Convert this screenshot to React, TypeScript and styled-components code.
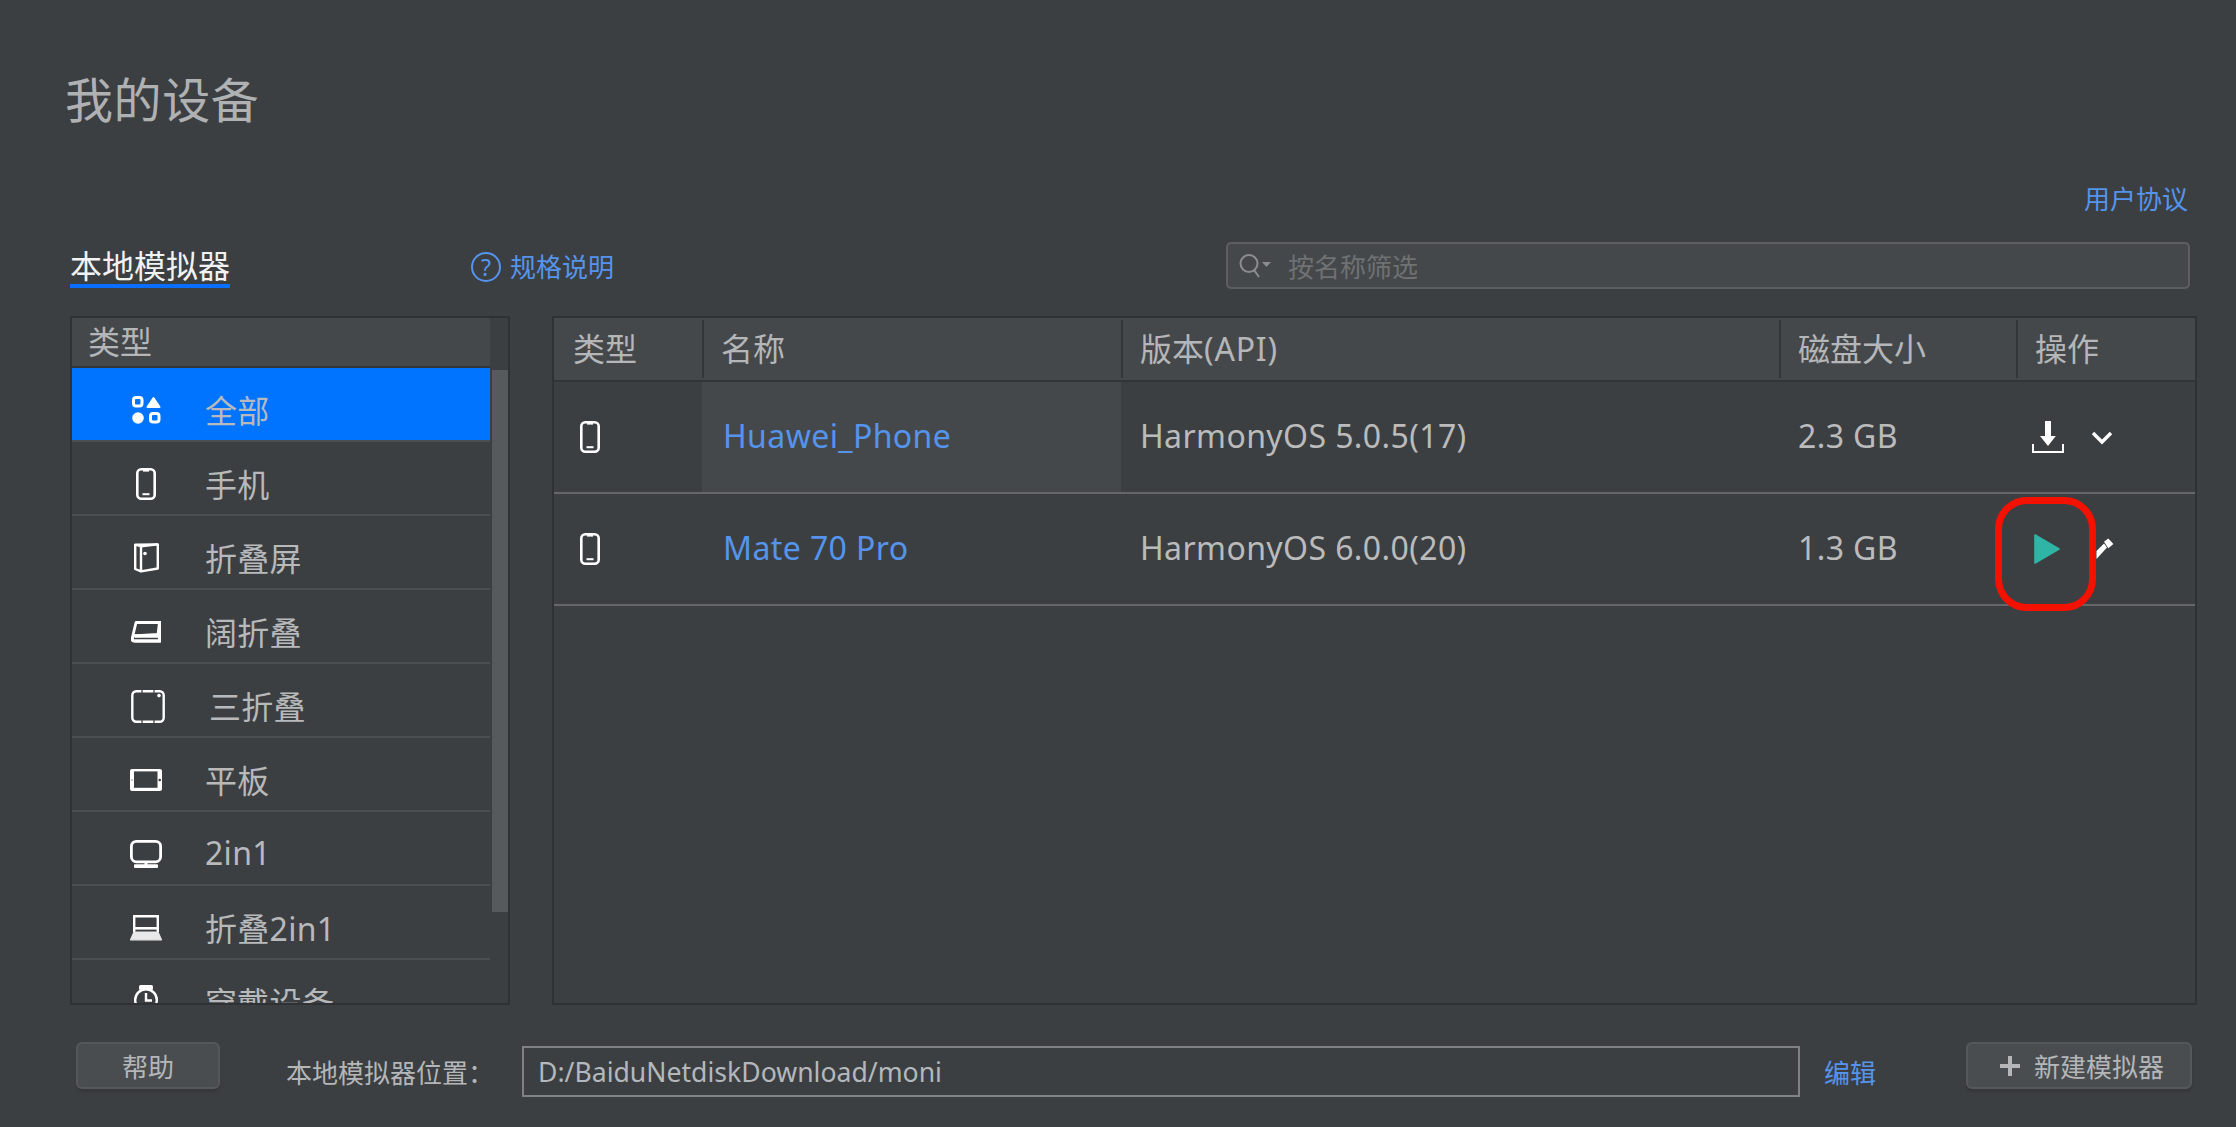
import React from 'react'
import styled, { createGlobalStyle } from 'styled-components'

const GlobalStyle = createGlobalStyle`
  html, body {
    margin: 0;
    padding: 0;
    background: #3c3f42;
  }
  * {
    box-sizing: border-box;
  }
`

const AllIcon = () => (
  <svg width="29" height="28" viewBox="0 0 29 28">
    <rect x="1.5" y="1.5" width="8.5" height="8.5" rx="2.5" fill="none" stroke="#fff" strokeWidth="3" />
    <path d="M21.5 2 L27.5 11 H15.5 Z" fill="#fff" stroke="#fff" strokeWidth="2" strokeLinejoin="round" />
    <circle cx="6" cy="22" r="5.8" fill="#fff" />
    <rect x="18.5" y="17.5" width="8.5" height="8.5" rx="2.5" fill="none" stroke="#fff" strokeWidth="3" />
  </svg>
)

const PhoneIcon = () => (
  <svg width="20" height="32" viewBox="0 0 20 32">
    <rect x="1.3" y="1.3" width="17.4" height="29.4" rx="4" fill="none" stroke="#fff" strokeWidth="2.6" />
    <rect x="6.5" y="25.2" width="7" height="2" fill="#fff" />
    <rect x="7" y="2" width="6" height="1.6" fill="#fff" />
  </svg>
)

const FoldIcon = () => (
  <svg width="25" height="30" viewBox="0 0 25 30" fill="none" stroke="#fff" strokeWidth="2.4" strokeLinejoin="round">
    <path d="M7 3.2 L23.8 1.4 V25.5 L7 28.4 Z" />
    <path d="M7 3.2 L1.2 1.6 L23.8 1.4 M1.2 1.6 V26 L7 28.4" />
    <circle cx="11" cy="10.5" r="1.8" fill="#fff" stroke="none" />
  </svg>
)

const WideFoldIcon = () => (
  <svg width="30" height="22" viewBox="0 0 30 22" fill="none" stroke="#fff" strokeWidth="2.8" strokeLinejoin="round">
    <path d="M5 1.5 L28.6 1.3 L27 13.5 L1.8 15 Z" />
    <path d="M1.6 15.5 C0.8 19 1.5 20 4 20 H28.6 V1.3 V15 H4" strokeWidth="3.4" />
  </svg>
)

const TriFoldIcon = () => (
  <svg width="34" height="33" viewBox="0 0 34 33">
    <rect x="1.3" y="1.3" width="31.4" height="30.4" rx="4" fill="none" stroke="#fff" strokeWidth="2.4" />
    <path d="M11 0 V3 M23 0 V3 M11 30 V33 M23 30 V33" stroke="#3c3f42" strokeWidth="1.2" />
    <circle cx="28" cy="5.6" r="1.8" fill="#fff" />
  </svg>
)

const TabletIcon = () => (
  <svg width="32" height="22" viewBox="0 0 32 22">
    <rect x="0" y="0" width="32" height="22" rx="2" fill="#fff" />
    <rect x="4" y="2.4" width="23.5" height="16.4" fill="#3c3f42" />
    <circle cx="2" cy="11" r="1" fill="#b5b5b5" />
    <circle cx="29.7" cy="11" r="1.3" fill="#3c3f42" />
  </svg>
)

const TwoInOneIcon = () => (
  <svg width="32" height="28" viewBox="0 0 32 28">
    <rect x="1.4" y="1.4" width="29.2" height="20.4" rx="5" fill="none" stroke="#fff" strokeWidth="2.8" />
    <rect x="14.5" y="22" width="3" height="3" fill="#fff" />
    <rect x="4" y="24.2" width="24" height="3.8" rx="1" fill="#fff" />
  </svg>
)

const LaptopIcon = () => (
  <svg width="32" height="26" viewBox="0 0 32 26">
    <path d="M4.2 17 V1.2 H27.8 V17" fill="none" stroke="#fff" strokeWidth="2.4" />
    <rect x="4" y="12" width="24" height="2.6" fill="#fff" />
    <path d="M4 17 H28 L31.5 24.8 H0.5 Z" fill="#e9e9e9" stroke="#e9e9e9" strokeWidth="1.2" strokeLinejoin="round" />
  </svg>
)

const WatchIcon = () => (
  <svg width="24" height="34" viewBox="0 0 24 34">
    <rect x="5" y="0" width="14" height="5" rx="1.5" fill="#fff" />
    <circle cx="12" cy="15" r="10.8" fill="none" stroke="#fff" strokeWidth="2.4" />
    <path d="M12 8 V15.5 H18" fill="none" stroke="#fff" strokeWidth="2.4" />
  </svg>
)

const DownloadIcon = () => (
  <svg width="32" height="32" viewBox="0 0 32 32">
    <path d="M13 0 H19 V15 H23.8 L16 25 L8 15 H13 Z" fill="#fff" />
    <path d="M1 23 V31 H31 V23" fill="none" stroke="#fff" strokeWidth="2" />
  </svg>
)

const ChevronIcon = () => (
  <svg width="22" height="15" viewBox="0 0 22 15">
    <path d="M2 3 L11 12 L20 3" fill="none" stroke="#fff" strokeWidth="3.4" />
  </svg>
)

const PlayIcon = () => (
  <svg width="26" height="30" viewBox="0 0 26 30">
    <path d="M1 1 L25 15 L1 29 Z" fill="#2fb5a6" stroke="#2fb5a6" strokeWidth="1.6" strokeLinejoin="round" />
  </svg>
)

const PencilIcon = () => (
  <svg width="18" height="22" viewBox="0 0 18 22">
    <path d="M0.5 13 L8 5.6 L11 9.6 L0.5 21 Z" fill="#fff" />
    <path d="M8 3.7 L12.3 0.4 L17.4 6 L12.3 10.3 Z" fill="#fff" />
  </svg>
)

const SearchIcon = () => (
  <svg width="32" height="24" viewBox="0 0 32 24">
    <circle cx="10" cy="9.5" r="8.5" fill="none" stroke="#8b8d8f" strokeWidth="2" />
    <path d="M15 16 L20 23" stroke="#8b8d8f" strokeWidth="2" />
    <path d="M23 8 H32 L27.5 13 Z" fill="#8b8d8f" />
  </svg>
)

const PlusIcon = () => (
  <svg width="20" height="20" viewBox="0 0 20 20">
    <path d="M8 0 H12 V8 H20 V12 H12 V20 H8 V12 H0 V8 H8 Z" fill="#b4b6b8" />
  </svg>
)

const deviceTypes = [
  { name: '全部', icon: <AllIcon />, active: true },
  { name: '手机', icon: <PhoneIcon /> },
  { name: '折叠屏', icon: <FoldIcon /> },
  { name: '阔折叠', icon: <WideFoldIcon /> },
  { name: '三折叠', icon: <TriFoldIcon />, indent: true },
  { name: '平板', icon: <TabletIcon /> },
  { name: '2in1', icon: <TwoInOneIcon /> },
  { name: '折叠2in1', icon: <LaptopIcon /> },
  { name: '穿戴设备', icon: <WatchIcon /> },
]

const App = () => {
  return (
    <Page>
      <GlobalStyle />
      <Title>我的设备</Title>
      <AgreementRow>
        <LinkText>用户协议</LinkText>
      </AgreementRow>
      <ToolRow>
        <Tab>本地模拟器</Tab>
        <HelpLink>
          <HelpBadge>?</HelpBadge>
          <LinkText>规格说明</LinkText>
        </HelpLink>
        <SearchBox>
          <SearchIcon />
          <Placeholder>按名称筛选</Placeholder>
        </SearchBox>
      </ToolRow>
      <Main>
        <ListPanel>
          <ListColumn>
            <ListHeader>类型</ListHeader>
            {deviceTypes.map((item) => (
              <TypeRow key={item.name} $active={item.active}>
                <TypeIconSlot $indent={item.indent}>{item.icon}</TypeIconSlot>
                <TypeName $indent={item.indent}>{item.name}</TypeName>
              </TypeRow>
            ))}
          </ListColumn>
          <ScrollTrack>
            <ScrollThumb />
          </ScrollTrack>
        </ListPanel>
        <TablePanel>
          <TableHead>
            <HeadCell>类型</HeadCell>
            <HeadCell>名称</HeadCell>
            <HeadCell>版本<Wide>(API)</Wide></HeadCell>
            <HeadCell>磁盘大小</HeadCell>
            <HeadCell>操作</HeadCell>
          </TableHead>
          <TableRow>
            <IconCell><PhoneIcon /></IconCell>
            <NameCell $hover>Huawei_Phone</NameCell>
            <TextCell>HarmonyOS 5.0.5(17)</TextCell>
            <TextCell>2.3 GB</TextCell>
            <ActionCell>
              <DownloadIcon />
              <ChevronIcon />
            </ActionCell>
          </TableRow>
          <TableRow>
            <IconCell><PhoneIcon /></IconCell>
            <NameCell>Mate 70 Pro</NameCell>
            <TextCell>HarmonyOS 6.0.0(20)</TextCell>
            <TextCell>1.3 GB</TextCell>
            <ActionCell $running>
              <PlayIcon />
              <PencilIcon />
              <RedMark />
            </ActionCell>
          </TableRow>
        </TablePanel>
      </Main>
      <Footer>
        <HelpButton>帮助</HelpButton>
        <PathLabel>本地模拟器位置：</PathLabel>
        <PathInput>D:/BaiduNetdiskDownload/moni</PathInput>
        <EditLink>编辑</EditLink>
        <NewButton>
          <PlusIcon />
          新建模拟器
        </NewButton>
      </Footer>
    </Page>
  )
}

export default App

const Page = styled.div`
  display: flex;
  flex-direction: column;
  width: 2236px;
  height: 1127px;
  padding: 68px 39px 0 70px;
  overflow: hidden;
  background: #3c3f42;
  color: #bbbbbb;
  font-family: "Noto Sans", "Noto Sans CJK SC", sans-serif;
`

const Title = styled.div`
  margin-left: -5px;
  font-size: 48px;
  letter-spacing: 0.6px;
  line-height: 64px;
  color: #afb1b3;
`

const AgreementRow = styled.div`
  display: flex;
  justify-content: flex-end;
  height: 36px;
  margin-top: 49px;
  padding-right: 9px;
`

const LinkText = styled.span`
  font-size: 26px;
  line-height: 36px;
  color: #5594ec;
`

const ToolRow = styled.div`
  display: flex;
  align-items: flex-start;
  height: 47px;
  margin-top: 25px;
  padding-right: 7px;
`

const Tab = styled.div`
  width: 160px;
  height: 46px;
  border-bottom: 4px solid #0a6fff;
  font-size: 32px;
  line-height: 48px;
  color: #f2f2f2;
  white-space: nowrap;
`

const HelpLink = styled.div`
  display: flex;
  align-items: center;
  gap: 9px;
  margin-left: 241px;
  padding-top: 7px;
`

const HelpBadge = styled.span`
  display: flex;
  align-items: center;
  justify-content: center;
  width: 30px;
  height: 30px;
  border: 2.5px solid #5594ec;
  border-radius: 50%;
  font-size: 23px;
  line-height: 1;
  color: #5594ec;
`

const SearchBox = styled.div`
  display: flex;
  align-items: center;
  width: 964px;
  height: 47px;
  margin-left: auto;
  padding: 0 0 0 11px;
  border: 2px solid #5c5e60;
  border-radius: 5px;
  background: #45484a;
`

const Placeholder = styled.span`
  margin-left: 17px;
  font-size: 26px;
  color: #6f7173;
`

const Main = styled.div`
  display: flex;
  gap: 42px;
  height: 689px;
  margin-top: 27px;
`

const ListPanel = styled.div`
  display: flex;
  width: 440px;
  border: 2px solid #2f3234;
  overflow: hidden;
`

const ListColumn = styled.div`
  flex: none;
  width: 418px;
  overflow: hidden;
`

const ListHeader = styled.div`
  height: 50px;
  padding-left: 16px;
  border-bottom: 2px solid #323538;
  background: #45484b;
  font-size: 32px;
  line-height: 48px;
  color: #b4b6b8;
`

const TypeRow = styled.div<{ $active?: boolean }>`
  display: flex;
  align-items: center;
  height: 74px;
  padding-top: 12px;
  border-bottom: 2px solid #4c4f51;
  background: ${(p) => (p.$active ? '#0073ff' : 'transparent')};
  ${(p) => p.$active && 'background-clip: padding-box;'}
`

const TypeIconSlot = styled.span<{ $indent?: boolean }>`
  display: flex;
  align-items: center;
  justify-content: center;
  flex: none;
  width: 40px;
  margin: 0 39px 0 54px;
  padding-left: ${(p) => (p.$indent ? '4px' : '0')};
`

const TypeName = styled.span<{ $indent?: boolean }>`
  padding: 0 0 3px ${(p) => (p.$indent ? '4px' : '0')};
  font-size: 32px;
  letter-spacing: 0.3px;
  white-space: nowrap;
  color: #b7b9bb;
`

const ScrollTrack = styled.div`
  flex: 1;
  padding: 52px 0 0 2px;
`

const ScrollThumb = styled.div`
  width: 16px;
  height: 542px;
  background: #575a5c;
`

const TablePanel = styled.div`
  flex: 1;
  border: 2px solid #2f3234;
  overflow: hidden;
`

const columns = '148px 419px 658px 237px 1fr'

const TableHead = styled.div`
  display: grid;
  grid-template-columns: ${columns};
  height: 64px;
  padding: 2px 0 3px;
  border-bottom: 2px solid #323538;
  background: #45484b;
`

const HeadCell = styled.div`
  padding-left: 17px;
  border-left: 2px solid #333639;
  font-size: 32px;
  line-height: 58px;
  color: #b4b6b8;
  white-space: nowrap;

  &:first-child {
    padding-left: 19px;
    border-left: 0;
  }
`

const Wide = styled.span`
  letter-spacing: 0.8px;
`

const TableRow = styled.div`
  display: grid;
  grid-template-columns: ${columns};
  height: 112px;
  border-bottom: 2px solid #646668;
`

const IconCell = styled.div`
  display: flex;
  align-items: center;
  padding-left: 26px;
`

const TextCell = styled.div`
  display: flex;
  align-items: center;
  padding: 0 0 3px 19px;
  font-size: 32px;
  letter-spacing: 0.4px;
  color: #bbbbbb;
  white-space: nowrap;
`

const NameCell = styled(TextCell)<{ $hover?: boolean }>`
  padding-left: 21px;
  color: #5594ec;
  background: ${(p) => (p.$hover ? '#45484b' : 'transparent')};
`

const ActionCell = styled.div<{ $running?: boolean }>`
  position: relative;
  display: flex;
  align-items: center;
  gap: ${(p) => (p.$running ? '36px' : '27px')};
  padding-left: ${(p) => (p.$running ? '18px' : '16px')};
`

const RedMark = styled.div`
  position: absolute;
  left: -21px;
  top: 3px;
  width: 101px;
  height: 114px;
  border: 7px solid #f41100;
  border-radius: 32px;
`

const Footer = styled.div`
  display: flex;
  align-items: flex-start;
  margin-top: 37px;
  padding-left: 6px;
`

const Button = styled.div`
  display: flex;
  align-items: center;
  justify-content: center;
  height: 47px;
  border: 2px solid #55585a;
  border-radius: 6px;
  background: #4a4d50;
  box-shadow: 0 3px 2px #36383b;
  font-size: 26px;
  color: #b4b6b8;
  white-space: nowrap;
`

const HelpButton = styled(Button)`
  width: 144px;
`

const PathLabel = styled.span`
  margin: 13px 0 0 66px;
  width: 236px;
  flex: none;
  font-size: 26px;
  line-height: 36px;
  color: #b4b6b8;
  white-space: nowrap;
`

const PathInput = styled.div`
  display: flex;
  align-items: center;
  width: 1278px;
  height: 51px;
  margin: 4px 0 0 0;
  padding-left: 14px;
  border: 2px solid #7f8183;
  font-size: 26.6px;
  color: #b4b8bc;
`

const EditLink = styled(LinkText)`
  margin: 13px 0 0 24px;
`

const NewButton = styled(Button)`
  justify-content: flex-start;
  gap: 14px;
  width: 226px;
  margin-left: 90px;
  padding-left: 32px;
`
